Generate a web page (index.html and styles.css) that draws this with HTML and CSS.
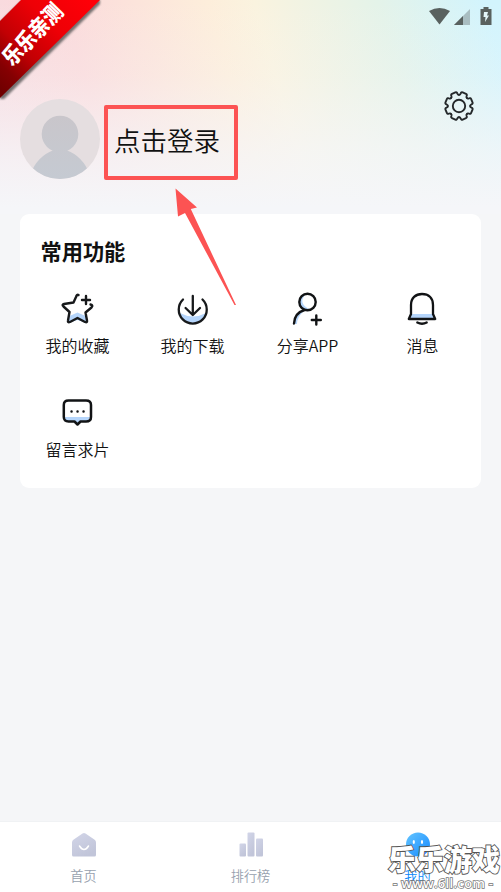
FILE: index.html
```html
<!DOCTYPE html>
<html lang="zh-CN">
<head>
<meta charset="UTF-8">
<title>我的</title>
<link rel="stylesheet" href="styles.css">
</head>
<body>
<div class="app">
  <header class="hero">
    <div class="status">
      <svg width="63" height="19" viewBox="0 0 63 19">
        <path fill="#59615f" d="M0 4Q10.500-2 21 4L10.500 17.500Z"/>
        <path fill="#a9bdc1" d="M25 18L41 2V18Z"/>
        <path fill="#59615f" d="M25 18L34 9V18Z"/>
        <path fill="#59615f" d="M54.500 0h5v2h3v16H51.500V2h3Z"/>
        <path fill="#e4f7fa" d="M55 5h4l-1 3.500h2L56 15l.500-5h-2Z"/>
      </svg>
    </div>
    <div class="settings">
      <svg width="32" height="32" viewBox="-16 -16 32 32" fill="none" stroke="#24282a" stroke-width="1.900" stroke-linecap="round">
        <defs><path id="tooth" d="M-4.300-10.400Q-3.200-10.600-3.200-12.200Q-3.300-13.900-1.800-13.900L1.800-13.900Q3.300-13.900 3.200-12.200Q3.200-10.600 4.300-10.400"/></defs>
        <use href="#tooth" transform="rotate(22.5)"/><use href="#tooth" transform="rotate(67.5)"/>
        <use href="#tooth" transform="rotate(112.5)"/><use href="#tooth" transform="rotate(157.5)"/>
        <use href="#tooth" transform="rotate(202.5)"/><use href="#tooth" transform="rotate(247.5)"/>
        <use href="#tooth" transform="rotate(292.5)"/><use href="#tooth" transform="rotate(337.5)"/>
        <circle r="6.200"/>
      </svg>
    </div>
    <div class="profile">
      <svg class="avatar" width="80" height="80" viewBox="0 0 80 80">
        <defs>
          <clipPath id="round"><circle cx="40" cy="40" r="40"/></clipPath>
          <linearGradient id="person" x1="0" y1="17" x2="0" y2="80" gradientUnits="userSpaceOnUse"><stop stop-color="#c9c6cb"/><stop offset="1" stop-color="#c5cad2"/></linearGradient>
        </defs>
        <circle cx="40" cy="40" r="40" fill="#e5dee0"/>
        <g clip-path="url(#round)" fill="url(#person)"><circle cx="40" cy="35" r="18.300"/><path d="M10 76Q17 57 34 51H46Q63 57 70 76V80H10Z"/></g>
      </svg>
      <div class="login">点击登录</div>
    </div>
  </header>

  <main class="card">
    <h2>常用功能</h2>
    <div class="grid">
      <div class="item">
        <svg width="36" height="36" viewBox="0 0 36 36" fill="none" stroke="#17191b" stroke-width="2.400" stroke-linecap="round" stroke-linejoin="round">
          <path fill="#b5d5fb" stroke="none" d="M9.500 25L17.500 21.500L25.500 25L26.500 32L17.500 29L8.500 32Z"/>
          <path d="M18.500 4Q17 3 16 6L13.500 11.500L4 13Q1.500 13.500 3.500 15.500L9.500 21L8 29.500Q7.500 32 10 31L17.500 27L25 31Q27.500 32 27 29.500L25.500 21.500L31.500 16.500Q33.500 14.500 30.500 13.500"/>
          <path d="M26 5v8M22 9h8"/>
        </svg>
        <span>我的收藏</span>
      </div>
      <div class="item">
        <svg width="36" height="36" viewBox="0 0 36 36" fill="none" stroke="#17191b" stroke-width="2.300" stroke-linecap="round" stroke-linejoin="round">
          <path fill="#b5d5fb" stroke="none" d="M5 22Q18 29 31 22Q29 32 18 32T5 22Z"/>
          <path d="M8 8.500A14 14 0 1 0 27.500 8.500M17.800 5v19M10.600 17L17.800 24L25 17"/>
        </svg>
        <span>我的下载</span>
      </div>
      <div class="item">
        <svg width="36" height="36" viewBox="0 0 36 36" fill="none" stroke="#111315" stroke-width="2.400" stroke-linecap="round">
          <path fill="#b5d5fb" stroke="none" d="M15 4Q9 6 9.500 12T17 19Q7 20 3.500 33H7Q7 26 14 20L19 18Q8 12 15 4Z"/>
          <circle cx="17.500" cy="11" r="8.200"/><path d="M14.500 19Q4.500 22 4 32.500M26.300 24.500v9M21.800 29h9"/>
        </svg>
        <span>分享APP</span>
      </div>
      <div class="item">
        <svg width="36" height="36" viewBox="0 0 36 36" fill="none" stroke="#111315" stroke-width="2.300" stroke-linecap="round" stroke-linejoin="round">
          <path fill="#b5d5fb" stroke="none" d="M6 23h22l2 5H4Z"/>
          <path d="M3.800 28L6 23V14C6 7 10.500 3 17 3S28 7 28 14v9l2.200 5ZM12.300 31.500Q17 34 21.700 31.500"/>
        </svg>
        <span>消息</span>
      </div>
      <div class="item">
        <svg width="36" height="36" viewBox="0 0 36 36" fill="none" stroke="#111315" stroke-width="2.500" stroke-linejoin="round">
          <path fill="#b5d5fb" stroke="none" d="M3.500 22H30.500L27 27H20L17 30L14 27H6Z"/>
          <path d="M8.500 5.500H26Q31 5.500 31 10V22Q31 26.500 26 26.500H20.500L17.500 29.500L14.500 26.500H8.500Q3.800 26.500 3.800 22V10Q3.800 5.500 8.500 5.500Z"/>
          <path stroke-width="2.400" stroke-linecap="round" d="M11.500 16.500h.1M17.500 16.500h.1M23.500 16.500h.1"/>
        </svg>
        <span>留言求片</span>
      </div>
    </div>
  </main>

  <nav class="tabs">
    <div class="tab">
      <svg width="28" height="26" viewBox="0 0 28 26">
        <defs><linearGradient id="muted" x1="0" y1="0" x2=".5" y2="1"><stop stop-color="#d2d5e8"/><stop offset="1" stop-color="#c1c5d9"/></linearGradient></defs>
        <path fill="url(#muted)" d="M12.500 1.500Q14 .300 15.500 1.500L25 8Q26 9 26 10.500V23Q26 24.500 24.500 24.500H3.500Q2 24.500 2 23V10.500Q2 9 3 8Z"/><path fill="none" stroke="#fff" stroke-width="1.500" stroke-linecap="round" d="M9.500 14Q14 21 18.500 14"/>
      </svg>
      <span>首页</span>
    </div>
    <div class="tab">
      <svg width="28" height="26" viewBox="0 0 28 26" fill="url(#muted)"><rect x="2.500" y="11.500" width="6.500" height="13" rx="1"/><rect x="10.500" y=".500" width="7" height="24" rx="1"/><rect x="19" y="6.500" width="7" height="18" rx="1"/></svg>
      <span>排行榜</span>
    </div>
    <div class="tab active">
      <svg width="28" height="26" viewBox="0 0 28 26"><defs><linearGradient id="face" x1="0" y1="0" x2="1" y2="1"><stop stop-color="#64c5ff"/><stop offset="1" stop-color="#168aff"/></linearGradient></defs><circle cx="14" cy="12.500" r="12" fill="url(#face)"/><ellipse cx="9.800" cy="10" rx="1.100" ry="2.100" fill="#fff"/><ellipse cx="18" cy="10" rx="1.100" ry="2.100" fill="#fff"/></svg>
      <span>我的</span>
    </div>
  </nav>

  <svg class="ribbon" width="102" height="102" viewBox="0 0 102 102">
    <defs>
      <linearGradient id="red" x1="90" y1="0" x2="0" y2="90" gradientUnits="userSpaceOnUse"><stop stop-color="#ff0008"/><stop offset=".35" stop-color="#ee0006"/><stop offset=".65" stop-color="#c20004"/><stop offset=".85" stop-color="#850002"/><stop offset="1" stop-color="#700000"/></linearGradient>
      <filter id="shade"><feGaussianBlur stdDeviation="1"/></filter>
    </defs>
    <path filter="url(#shade)" fill="#555" opacity=".8" d="M22 0H100V4L4 99H0V22Z"/>
    <path fill="url(#red)" d="M21 0H100L0 98V21Z"/>
    <text transform="translate(12 67) rotate(-46) scale(.86 1)" class="ribbon-text">乐乐亲测</text>
  </svg>
  <div class="highlight"></div>
  <svg class="arrow" width="66" height="120" viewBox="0 0 66 120"><path fill="#fc5353" d="M4.500 1.500L26 20.500L19.800 22L65 118L63.500 118L14 26L7 29.500Z"/></svg>
  <svg class="watermark" width="116" height="52" viewBox="0 0 116 52">
    <text class="brand" x="3" y="31" textLength="112" lengthAdjust="spacingAndGlyphs">乐乐游戏</text>
    <text class="site" x="8" y="47.500" textLength="100">- www.6ll.com -</text>
  </svg>
</div>
</body>
</html>
```
FILE: styles.css
```css
* { box-sizing: border-box; }
body {
  margin: 0;
  background: #f5f6f8;
  color: #111;
  font-family: "Noto Sans CJK SC", sans-serif;
}
.app {
  position: relative;
  display: flex;
  flex-direction: column;
  width: 501px;
  height: 892px;
  overflow: hidden;
}
.hero {
  display: flex;
  flex-direction: column;
  height: 214px;
  background:
    linear-gradient(180deg, rgba(245,246,249,0) 0%, rgba(245,246,249,.22) 35%, rgba(245,246,249,.74) 72%, #f5f6f9 97%),
    linear-gradient(74deg, #f7dbe1 0%, #fbdadb 22%, #fdeedb 48%, #faf3df 56%, #e4f3e9 78%, #d2f4fd 97%);
}
.status {
  display: flex;
  justify-content: flex-end;
  padding: 7px 9px 0 0;
  height: 89.500px;
}
.settings {
  display: flex;
  justify-content: flex-end;
  height: 9.500px;
  padding-right: 26px;
}
.settings svg { flex: none; }
.profile {
  display: flex;
  height: 80px;
  padding-left: 20px;
}
.login {
  margin-left: 14px;
  font-size: 26.500px;
  font-weight: 350;
  line-height: 82px;
  white-space: nowrap;
}
.card {
  width: 461px;
  height: 274px;
  margin: 0 20px;
  padding-top: 21px;
  border-radius: 9px;
  background: #fff;
}
h2 {
  margin: 0 0 0 20.500px;
  font-size: 21.200px;
  line-height: 31px;
  font-weight: 700;
}
.grid {
  display: grid;
  grid-template-columns: repeat(4, 115px);
  grid-auto-rows: 104px;
  padding-top: 25px;
}
.item {
  display: flex;
  flex-direction: column;
  align-items: center;
}
.item span {
  margin-top: 6px;
  font-size: 16px;
  font-weight: 350;
  line-height: 24px;
}
.tabs {
  display: grid;
  grid-template-columns: repeat(3, 1fr);
  height: 71px;
  margin-top: auto;
  border-top: 1px solid #f0f2f4;
  background: #fff;
}
.tab {
  display: flex;
  flex-direction: column;
  align-items: center;
  padding-top: 10px;
  color: #97a1ae;
}
.tab span {
  margin-top: 8px;
  font-size: 13.200px;
  font-weight: 350;
  line-height: 20px;
}
.tab.active { color: #0b87f8; }
.ribbon {
  position: absolute;
  top: 0;
  left: 0;
}
.ribbon-text {
  fill: #fff;
  font-size: 22px;
  font-weight: 900;
}
.highlight {
  position: absolute;
  left: 104px;
  top: 105px;
  width: 134px;
  height: 75px;
  border: 4px solid #fc5353;
  border-radius: 2px;
}
.arrow {
  position: absolute;
  left: 171px;
  top: 187px;
}
.watermark {
  position: absolute;
  left: 385px;
  top: 840px;
}
.brand, .site {
  fill: #fff;
  stroke: #555;
  stroke-width: 1.800px;
  paint-order: stroke;
}
.brand {
  font-size: 29px;
  font-weight: 900;
}
.site {
  font-family: "Open Sans", sans-serif;
  font-size: 13px;
  font-weight: 600;
  stroke: #777;
  stroke-width: 1.500px;
}
```
